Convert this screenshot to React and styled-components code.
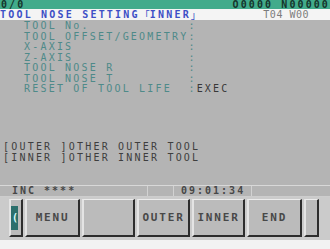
import React from 'react'
import styled, { createGlobalStyle } from 'styled-components'

const GlobalStyle = createGlobalStyle`
  html, body {
    margin: 0;
    padding: 0;
    background: #f2f2f2;
  }
  body {
    font-family: "DejaVu Sans Mono", "Liberation Mono", monospace;
  }
`

const Screen = styled.div`
  width: 330px;
  height: 249px;
  display: flex;
  flex-direction: column;
  overflow: hidden;
`

const TopBar = styled.div`
  height: 9px;
  background: #41ab8b;
  color: #15352c;
  display: flex;
  justify-content: space-between;
  align-items: center;
  padding: 0 0 0 1px;
  font-size: 10px;
  line-height: 9px;
  letter-spacing: 2.1px;
  font-weight: bold;
`

const TitleBar = styled.div`
  height: 11px;
  background: #f4f4f4;
  display: flex;
  align-items: center;
  font-size: 10px;
  line-height: 10px;
  letter-spacing: 2.2px;
`

const Title = styled.div`
  height: 10px;
  color: #3d4fc6;
  font-weight: bold;
  white-space: pre;
  flex: 1;
  display: flex;
  align-items: center;
`

const Bracket = styled.span`
  font-family: "Noto Sans CJK JP", sans-serif;
  font-weight: normal;
  font-size: 10px;
  line-height: 10px;
  height: 10px;
  letter-spacing: 0;
  display: inline-block;
`

const ToolNo = styled.span`
  color: #7c7c7c;
  white-space: pre;
  padding-right: 21px;
  letter-spacing: 0.5px;
`

const Body = styled.div`
  flex: 1;
  background: #b4b4b4;
  padding: 1px 0 0 3px;
  font-size: 10px;
  letter-spacing: 2.2px;
`

const ItemList = styled.div`
  padding-left: 21px;
  line-height: 10.5px;
`

const Item = styled.div`
  white-space: pre;
  color: #4e8a89;
`

const Value = styled.span`
  color: #383838;
`

const Messages = styled.div`
  margin-top: 46px;
  line-height: 11px;
  color: #3e3e3e;
`

const Message = styled.div`
  white-space: pre;
`

const StatusBar = styled.div`
  height: 12px;
  box-sizing: border-box;
  background: #b4b4b4;
  border-top: 1px solid #d8d8d8;
  border-bottom: 1px solid #cdcdcd;
  display: flex;
  font-size: 10px;
  line-height: 10px;
  letter-spacing: 2px;
  color: #474747;
  font-weight: bold;
`

const StatusCell = styled.div`
  width: ${p => p.w}px;
  box-sizing: border-box;
  padding-left: ${p => p.pad || 0}px;
  border-right: ${p => (p.last ? 'none' : '1px solid #d2d2d2')};
  white-space: pre;
`

const KeyBar = styled.div`
  height: 43px;
  box-sizing: border-box;
  background: #cbcbcb;
  display: flex;
  gap: 2px;
  padding: 2px 0 0 9px;
  align-items: flex-start;
`

const Key = styled.div`
  width: ${p => p.w}px;
  height: 38px;
  box-sizing: border-box;
  background: #bbbbbb;
  border-top: 1px solid #ececec;
  border-left: 2px solid #e4e4e4;
  border-right: 2px solid #2d2d2d;
  border-bottom: 2px solid #2d2d2d;
  display: flex;
  align-items: center;
  justify-content: center;
  color: #484848;
  font-size: 11px;
  font-weight: bold;
  letter-spacing: 1.8px;
`

const Marker = styled.span`
  width: 7px;
  height: 24px;
  margin-left: -3px;
  background: #2c6f6c;
  color: #dff;
  font-size: 10px;
  line-height: 24px;
  text-align: right;
  letter-spacing: 0;
`

const BottomStrip = styled.div`
  height: 9px;
  background: #f2f2f2;
`

const items = [
  ['TOOL No.            :', ''],
  ['TOOL OFFSET/GEOMETRY:', ''],
  ['X-AXIS              :', ''],
  ['Z-AXIS              :', ''],
  ['TOOL NOSE R         :', ''],
  ['TOOL NOSE T         :', ''],
  ['RESET OF TOOL LIFE  :', 'EXEC'],
]

const keys = [
  { w: 14, marker: true },
  { w: 55, label: 'MENU' },
  { w: 53, label: '' },
  { w: 53, label: 'OUTER' },
  { w: 53, label: 'INNER' },
  { w: 55, label: 'END' },
  { w: 15, label: '' },
]

export default function App() {
  return (
    <Screen>
      <GlobalStyle />
      <TopBar>
        <span>0/0</span>
        <span>O0000 N00000</span>
      </TopBar>
      <TitleBar>
        <Title>
          TOOL NOSE SETTING<Bracket>「</Bracket>INNER<Bracket>」</Bracket>
        </Title>
        <ToolNo>T04 W00</ToolNo>
      </TitleBar>
      <Body>
        <ItemList>
          {items.map(([label, value]) => (
            <Item key={label}>
              {label}
              <Value>{value}</Value>
            </Item>
          ))}
        </ItemList>
        <Messages>
          <Message>[OUTER ]OTHER OUTER TOOL</Message>
          <Message>[INNER ]OTHER INNER TOOL</Message>
        </Messages>
      </Body>
      <StatusBar>
        <StatusCell w={148} pad={12}>INC ****</StatusCell>
        <StatusCell w={26} />
        <StatusCell w={78} pad={7}>09:01:34</StatusCell>
        <StatusCell w={78} last />
      </StatusBar>
      <KeyBar>
        {keys.map((k, i) => (
          <Key key={i} w={k.w}>
            {k.marker ? <Marker>(</Marker> : k.label}
          </Key>
        ))}
      </KeyBar>
      <BottomStrip />
    </Screen>
  )
}
